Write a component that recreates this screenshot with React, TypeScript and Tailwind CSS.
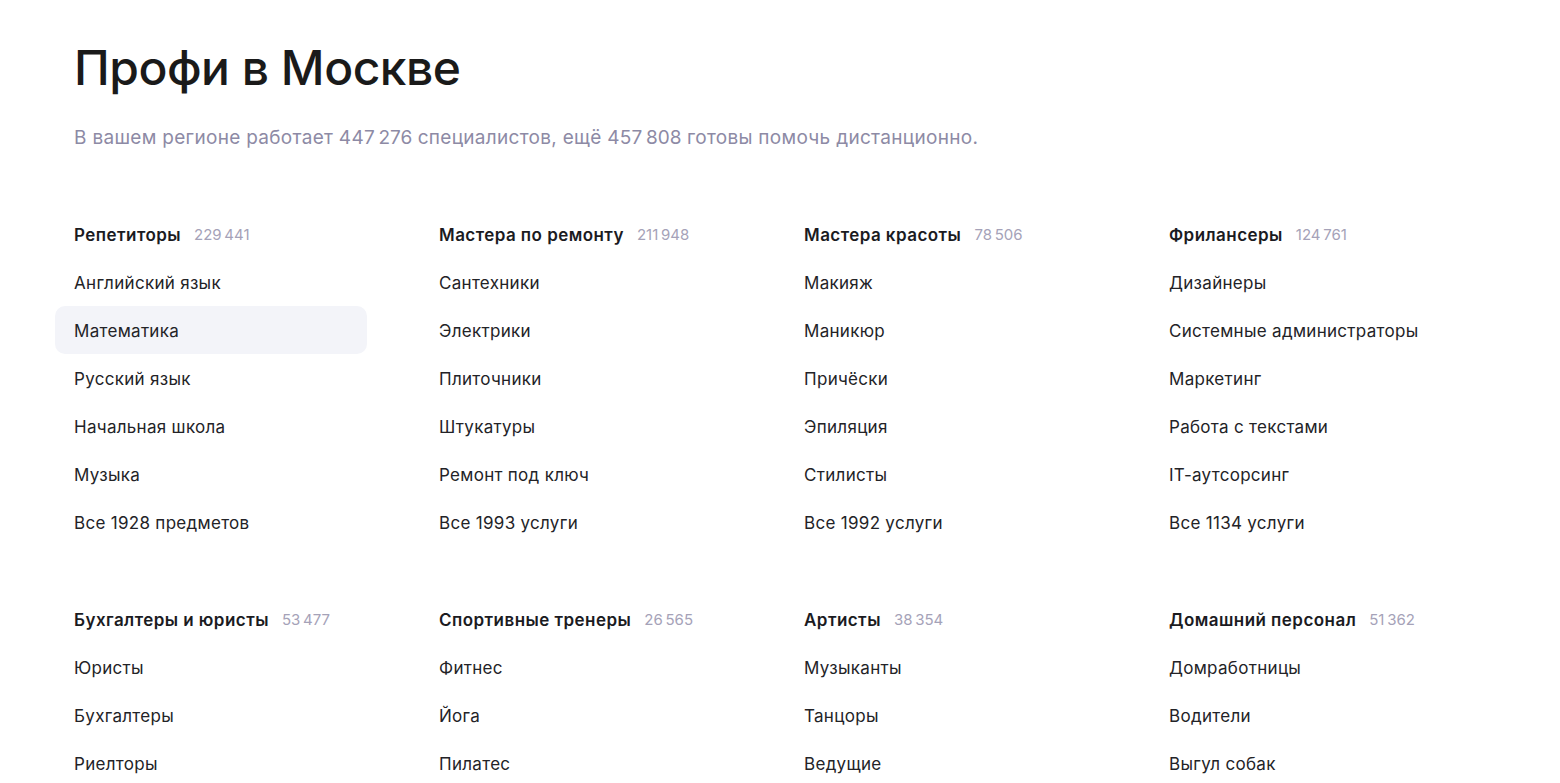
import React from "react";

type Group = { title: string; count: string; items: string[] };

const NS = "\u202F";

const rows: Group[][] = [
  [
    { title: "Репетиторы", count: `229${NS}441`, items: ["Английский язык", "Математика", "Русский язык", "Начальная школа", "Музыка", "Все 1928 предметов"] },
    { title: "Мастера по ремонту", count: `211${NS}948`, items: ["Сантехники", "Электрики", "Плиточники", "Штукатуры", "Ремонт под ключ", "Все 1993 услуги"] },
    { title: "Мастера красоты", count: `78${NS}506`, items: ["Макияж", "Маникюр", "Причёски", "Эпиляция", "Стилисты", "Все 1992 услуги"] },
    { title: "Фрилансеры", count: `124${NS}761`, items: ["Дизайнеры", "Системные администраторы", "Маркетинг", "Работа с текстами", "IT-аутсорсинг", "Все 1134 услуги"] },
  ],
  [
    { title: "Бухгалтеры и юристы", count: `53${NS}477`, items: ["Юристы", "Бухгалтеры", "Риелторы"] },
    { title: "Спортивные тренеры", count: `26${NS}565`, items: ["Фитнес", "Йога", "Пилатес"] },
    { title: "Артисты", count: `38${NS}354`, items: ["Музыканты", "Танцоры", "Ведущие"] },
    { title: "Домашний персонал", count: `51${NS}362`, items: ["Домработницы", "Водители", "Выгул собак"] },
  ],
];

function Column({ g, highlight }: { g: Group; highlight?: string }) {
  return (
    <div className="flex flex-col">
      <div className="flex h-12 items-center gap-[13px] pt-[4px]">
        <span className="text-[17px] font-semibold tracking-[0.45px] text-[#1b1b1f]">{g.title}</span>
        <span className="text-[15px] tracking-[0.35px] text-[#a5a2b8]">{g.count}</span>
      </div>
      {g.items.map((it) => (
        <div
          key={it}
          className={
            "-ml-[19px] flex h-12 w-[312px] items-center rounded-[10px] pl-[19px] pt-[4px] text-[17px] tracking-[0.3px] text-[#232327] " +
            (it === highlight ? "bg-[#f3f4f9]" : "")
          }
        >
          {it}
        </div>
      ))}
    </div>
  );
}

export default function App() {
  return (
    <div
      className="h-[783px] overflow-hidden bg-white px-[74px] pt-[39px]"
      style={{ fontFamily: "Inter, 'Noto Sans', sans-serif" }}
    >
      <h1 className="text-[48px] font-medium leading-[58px] tracking-[-0.5px] text-[#1a1a1a]">Профи в Москве</h1>
      <p className="mt-[27px] text-[19px] tracking-[0.3px] text-[#8d8aa5]">
        В вашем регионе работает 447{NS}276 специалистов, ещё 457{NS}808 готовы помочь дистанционно.
      </p>
      <div className="mt-[57px] flex flex-col gap-[49px]">
        {rows.map((row, i) => (
          <div key={i} className="grid grid-cols-[365px_365px_365px_365px]">
            {row.map((g) => (
              <Column key={g.title} g={g} highlight="Математика" />
            ))}
          </div>
        ))}
      </div>
    </div>
  );
}
